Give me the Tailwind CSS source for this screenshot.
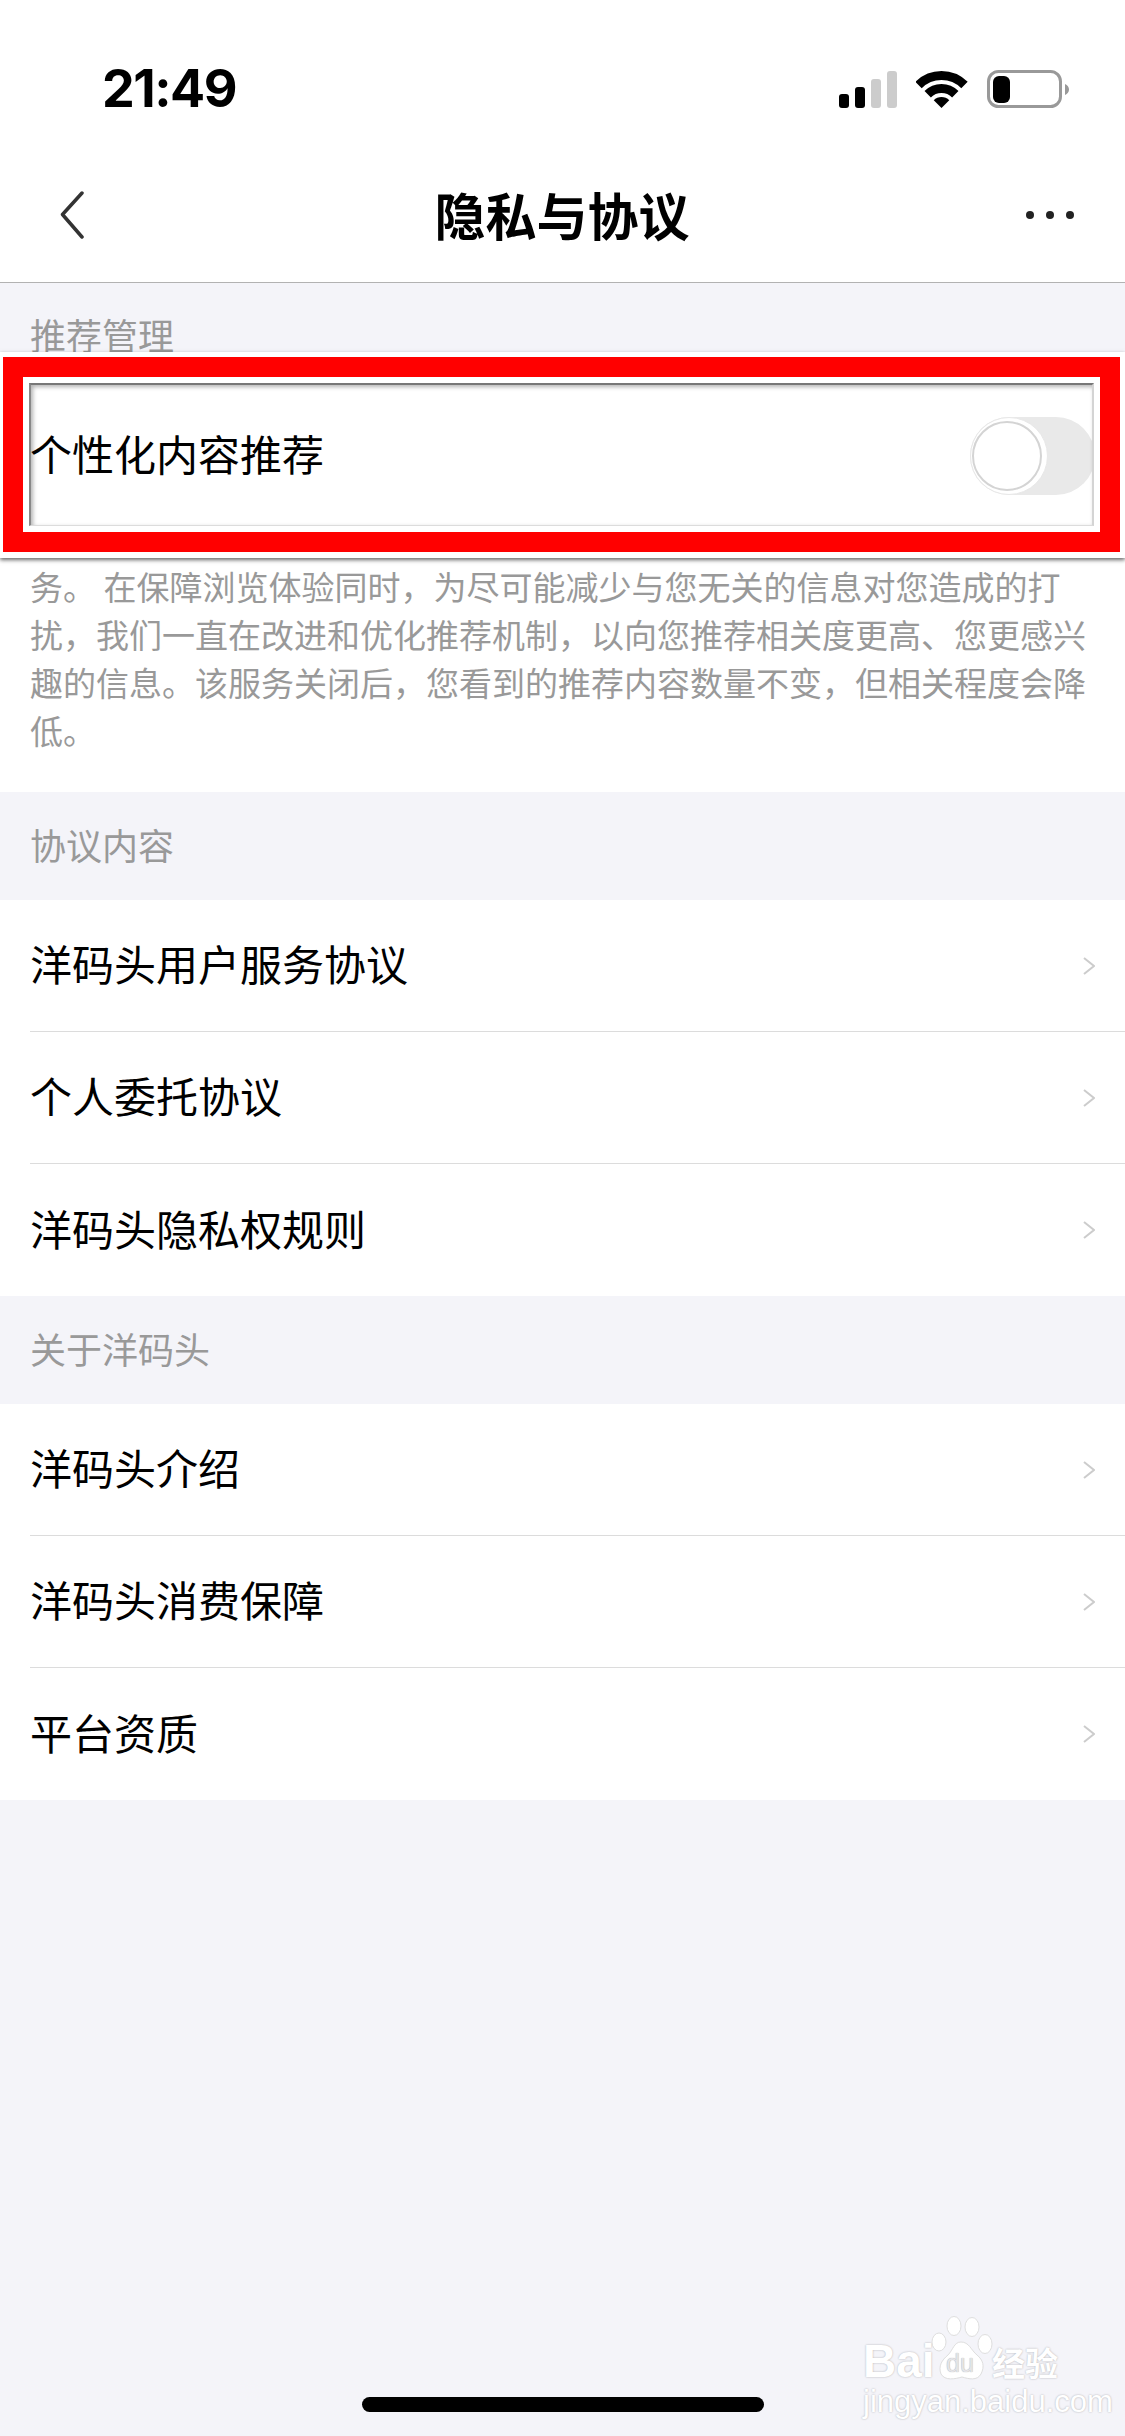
<!DOCTYPE html>
<html lang="zh-CN">
<head>
<meta charset="utf-8">
<title>隐私与协议</title>
<script src="https://cdn.jsdelivr.net/npm/@tailwindcss/browser@4"></script>
</head>
<body class="m-0">
<div class="relative w-[1125px] h-[2436px] overflow-hidden bg-[#f4f4f9] text-black font-['Noto_Sans_CJK_SC','Noto_Sans',sans-serif]">

  <header class="bg-white h-[283px] border-b border-[#b2b2b2]">
    <div class="h-[178px] flex items-center justify-between pl-[102px] pr-[56px]">
      <span class="text-[52px] leading-none font-bold font-['Inter',sans-serif] tracking-[-1.5px]">21:49</span>
      <div class="flex items-center">
        <svg width="58" height="37" viewBox="0 0 58 37" class="block">
          <rect x="0" y="23" width="10" height="14" rx="3" fill="#000"/>
          <rect x="16" y="16" width="10" height="21" rx="3" fill="#000"/>
          <rect x="32" y="8" width="10" height="29" rx="3" fill="#ccc"/>
          <rect x="48" y="0" width="10" height="37" rx="3" fill="#ccc"/>
        </svg>
        <svg width="52" height="37" viewBox="0 0 52 37" class="block ml-[19px]">
          <path d="M2.52 14.02A32.5 32.5 0 0 1 48.48 14.02" fill="none" stroke="#000" stroke-width="9"/>
          <path d="M11.71 23.21A19.5 19.5 0 0 1 39.29 23.21" fill="none" stroke="#000" stroke-width="9"/>
          <path d="M25.5 37L17.72 29.22A11 11 0 0 1 33.28 29.22Z" fill="#000"/>
        </svg>
        <svg width="82" height="38" viewBox="0 0 82 38" class="block ml-[19px]">
          <rect x="1.5" y="1.5" width="72" height="35" rx="10" fill="none" stroke="#999" stroke-width="3"/>
          <rect x="6" y="6" width="17" height="27" rx="6" fill="#000"/>
          <path d="M78 14C80.5 15 82 17 82 19.5C82 22 80.5 24 78 25Z" fill="#999"/>
        </svg>
      </div>
    </div>
    <nav class="h-[104px] pb-[31px] flex items-center justify-between pl-[60px] pr-[51px]">
      <svg width="24" height="48" viewBox="0 0 24 48" class="block mr-[14px]">
        <path d="M22 2L2.5 23.5L22 46" fill="none" stroke="#333" stroke-width="3.5" stroke-linecap="round" stroke-linejoin="round"/>
      </svg>
      <h1 class="text-[51px] leading-none font-bold m-0">隐私与协议</h1>
      <div class="flex gap-[12px] w-[48px]">
        <span class="w-[8px] h-[8px] rounded-full bg-[#222]"></span>
        <span class="w-[8px] h-[8px] rounded-full bg-[#222]"></span>
        <span class="w-[8px] h-[8px] rounded-full bg-[#222]"></span>
      </div>
    </nav>
  </header>

  <section>
    <div class="h-[100px] pl-[30px] pt-[24px] text-[36px] leading-[54px] text-[#999]">推荐管理</div>
    <div class="bg-white">
      <div class="h-[133px] pt-[10px] pl-[30px] pr-[30px] flex items-center justify-between">
        <span class="text-[42px] leading-none mb-[3px]">个性化内容推荐</span>
        <span class="relative block w-[125px] h-[78px] mt-[3px] rounded-full bg-[#e9e9e9]">
          <span class="absolute left-0 top-0 w-[78px] h-[78px] rounded-full bg-white border border-[#e8e8e8]"></span>
          <span class="absolute left-[2px] top-[4px] w-[70px] h-[70px] rounded-full bg-white border-2 border-[#d4d4d4]"></span>
        </span>
      </div>
      <p class="m-0 pl-[30px] pb-[36px] text-[33px] leading-[48px] text-[#999] whitespace-nowrap"><span class="relative top-0">个性化内容推荐服务是洋码头基于您的浏览记录为您提供的个性化服</span><br><span class="relative -top-[2px]">务。 在保障浏览体验同时，为尽可能减少与您无关的信息对您造成的打<br>扰，我们一直在改进和优化推荐机制，以向您推荐相关度更高、您更感兴<br>趣的信息。该服务关闭后，您看到的推荐内容数量不变，但相关程度会降<br>低。</span></p>
    </div>
  </section>

  <section>
    <div class="h-[108px] pl-[30px] flex items-center text-[36px] leading-none text-[#999]"><span class="mb-[5px]">协议内容</span></div>
    <ul class="m-0 p-0 list-none bg-white">
      <li class="h-[132px] pl-[30px]"><div class="h-full pr-[30px] flex items-center justify-between border-b border-[#dcdcdc]"><span class="text-[42px] leading-none mb-[5px]">洋码头用户服务协议</span><svg width="12" height="18" viewBox="0 0 12 18" class="block"><path d="M1 1L11 9L1 17" fill="none" stroke="#ccc" stroke-width="2"/></svg></div></li>
      <li class="h-[132px] pl-[30px]"><div class="h-full pr-[30px] flex items-center justify-between border-b border-[#dcdcdc]"><span class="text-[42px] leading-none mb-[5px]">个人委托协议</span><svg width="12" height="18" viewBox="0 0 12 18" class="block"><path d="M1 1L11 9L1 17" fill="none" stroke="#ccc" stroke-width="2"/></svg></div></li>
      <li class="h-[132px] pl-[30px]"><div class="h-full pr-[30px] flex items-center justify-between"><span class="text-[42px] leading-none mb-[5px]">洋码头隐私权规则</span><svg width="12" height="18" viewBox="0 0 12 18" class="block"><path d="M1 1L11 9L1 17" fill="none" stroke="#ccc" stroke-width="2"/></svg></div></li>
    </ul>
  </section>

  <section>
    <div class="h-[108px] pl-[30px] flex items-center text-[36px] leading-none text-[#999]"><span class="mb-[5px]">关于洋码头</span></div>
    <ul class="m-0 p-0 list-none bg-white">
      <li class="h-[132px] pl-[30px]"><div class="h-full pr-[30px] flex items-center justify-between border-b border-[#dcdcdc]"><span class="text-[42px] leading-none mb-[5px]">洋码头介绍</span><svg width="12" height="18" viewBox="0 0 12 18" class="block"><path d="M1 1L11 9L1 17" fill="none" stroke="#ccc" stroke-width="2"/></svg></div></li>
      <li class="h-[132px] pl-[30px]"><div class="h-full pr-[30px] flex items-center justify-between border-b border-[#dcdcdc]"><span class="text-[42px] leading-none mb-[5px]">洋码头消费保障</span><svg width="12" height="18" viewBox="0 0 12 18" class="block"><path d="M1 1L11 9L1 17" fill="none" stroke="#ccc" stroke-width="2"/></svg></div></li>
      <li class="h-[132px] pl-[30px]"><div class="h-full pr-[30px] flex items-center justify-between"><span class="text-[42px] leading-none mb-[5px]">平台资质</span><svg width="12" height="18" viewBox="0 0 12 18" class="block"><path d="M1 1L11 9L1 17" fill="none" stroke="#ccc" stroke-width="2"/></svg></div></li>
    </ul>
  </section>

  <!-- annotation frame laid over the toggle row -->
  <div class="absolute left-0 top-[352px] w-[1125px] h-[206px] box-border border-white border-t-[5px] border-b-[6px] border-l-[3px] border-r-[5px] shadow-[0_2px_4px_rgba(0,0,0,0.6)]">
    <div class="w-full h-full box-border border-[#ff0000] border-[20px]">
      <div class="w-full h-full box-border border-white border-[6px]">
        <div class="w-full h-full box-border border-t-[2px] border-l-[2px] border-b-[1px] border-r-[2px] border-t-[#777] border-l-[#888] border-b-[#dcdcdc] border-r-[#d4d4d4] shadow-[inset_2px_2px_4px_rgba(0,0,0,0.3)]"></div>
      </div>
    </div>
  </div>

  <!-- watermark -->
  <div class="absolute left-[863px] top-[2316px] w-[205px] h-[96px] text-white [text-shadow:0_0_2px_rgba(0,0,0,0.3)] font-['Liberation_Sans',sans-serif]">
    <span class="absolute left-0 top-[22px] text-[46px] leading-[46px] font-bold">Bai</span>
    <svg width="62" height="66" viewBox="0 0 62 66" class="absolute left-[68px] top-0">
      <g fill="#fff" stroke="#dedede" stroke-width="1">
        <ellipse cx="8" cy="26" rx="7" ry="9"/>
        <ellipse cx="23" cy="10" rx="7" ry="9.5"/>
        <ellipse cx="41" cy="11" rx="7" ry="9.5"/>
        <ellipse cx="54" cy="28" rx="7" ry="9.5"/>
        <path d="M30 26C38 26 40 34 46 39C52 44 54 50 50 58C46 65 38 63 31 61C24 63 14 65 10 58C7 50 11 44 17 39C22 34 23 26 30 26Z"/>
      </g>
    </svg>
    <span class="absolute left-[83px] top-[35px] text-[25px] leading-[25px] text-[#e4e4e8] [text-shadow:0_0_1px_rgba(0,0,0,0.4)]">du</span>
    <span class="absolute left-[129px] top-[30px] text-[33px] leading-[33px] font-bold font-['Noto_Sans_CJK_SC',sans-serif]">经验</span>
    <span class="absolute left-0 top-[70px] text-[31px] leading-[31px] whitespace-nowrap">jingyan.baidu.com</span>
  </div>

  <div class="absolute left-[362px] top-[2397px] w-[402px] h-[15px] rounded-full bg-black"></div>
</div>
</body>
</html>
